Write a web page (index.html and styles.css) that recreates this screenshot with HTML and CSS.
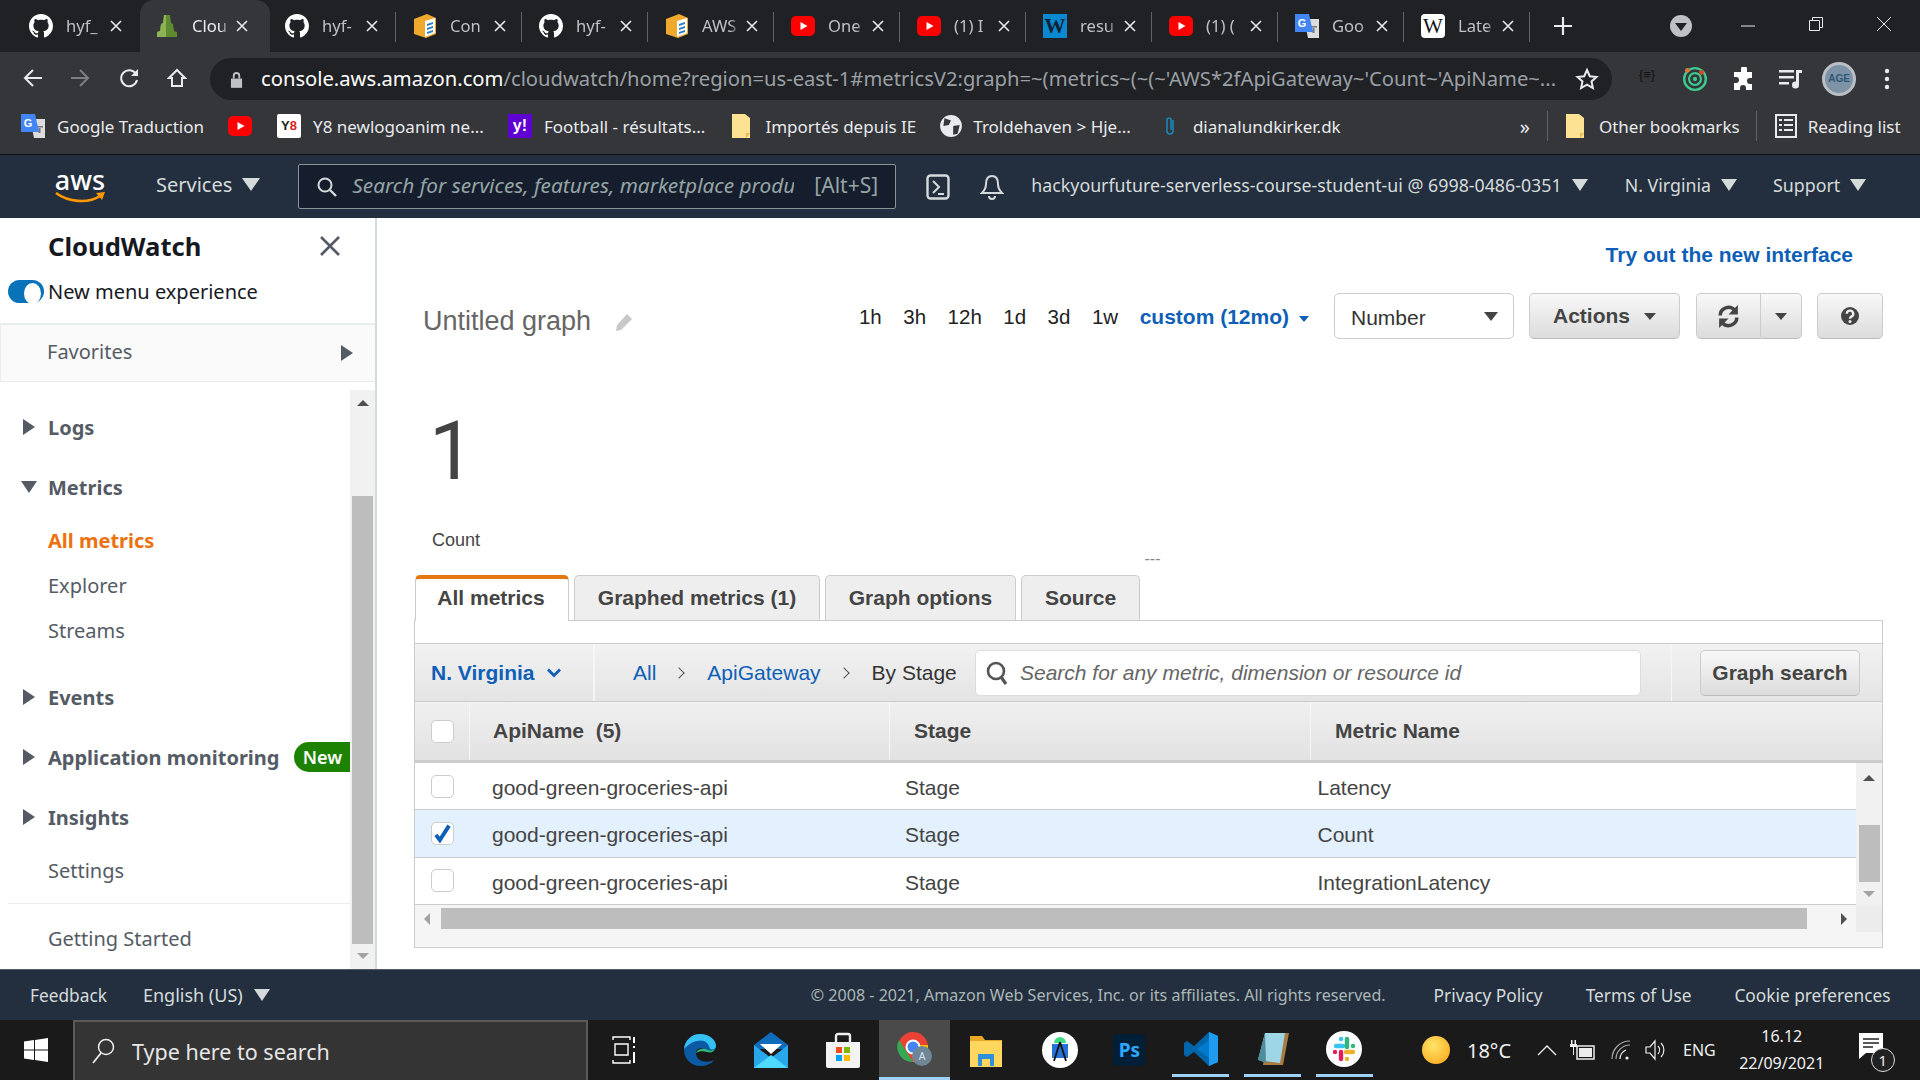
FILE: index.html
```html
<!DOCTYPE html>
<html>
<head>
  <meta charset="UTF-8">
  <title>CloudWatch Management Console</title>
  <link rel="stylesheet" href="styles.css">
</head>
<body>

<svg class="sprite" xmlns="http://www.w3.org/2000/svg">
  <symbol id="i-github" viewBox="0 0 16 16"><path fill="#fff" d="M8 0C3.58 0 0 3.58 0 8c0 3.54 2.29 6.53 5.47 7.59.4.07.55-.17.55-.38 0-.19-.01-.82-.01-1.49-2.01.37-2.53-.49-2.69-.94-.09-.23-.48-.94-.82-1.13-.28-.15-.68-.52-.01-.53.63-.01 1.08.58 1.23.82.72 1.21 1.87.87 2.33.66.07-.52.28-.87.51-1.07-1.78-.2-3.64-.89-3.64-3.95 0-.87.31-1.59.82-2.15-.08-.2-.36-1.02.08-2.12 0 0 .67-.21 2.2.82.64-.18 1.32-.27 2-.27.68 0 1.36.09 2 .27 1.53-1.04 2.2-.82 2.2-.82.44 1.1.16 1.92.08 2.12.51.56.82 1.27.82 2.15 0 3.07-1.87 3.75-3.65 3.95.29.25.54.73.54 1.48 0 1.07-.01 1.93-.01 2.2 0 .21.15.46.55.38A8.013 8.013 0 0016 8c0-4.42-3.58-8-8-8z"/></symbol>
  <symbol id="i-cw" viewBox="0 0 24 24"><path fill="#5f8a2e" d="M9 1h6l1 8 2 1 1 7 3 1v5H2v-5l3-1 1-7 2-1z"/><path fill="#8db356" d="M9 1h2v22H2v-5l3-1 1-7 2-1z"/></symbol>
  <symbol id="i-box" viewBox="0 0 24 24"><path fill="#f0a92c" d="M1 5l13-5 9 4v16l-10 4-12-4z"/><path fill="#fff" d="M12 7l10-3v15l-10 4z"/><path fill="#2a7fc0" d="M14 10l6-2v2l-6 2zm0 4l6-2v2l-6 2zm0 4l6-2v2l-6 2z"/></symbol>
  <symbol id="i-yt" viewBox="0 0 24 24"><rect x="0" y="2" width="24" height="20" rx="5" fill="#f00"/><path fill="#fff" d="M9.5 8l7 4-7 4z"/></symbol>
  <symbol id="i-gt" viewBox="0 0 24 24"><path fill="#ddd" d="M9 5h15v19H13z"/><path fill="#777" d="M15 12h7v1.5h-7zm2.500 2h2v5h-2z"/><path fill="#4285f4" d="M0 0h14l4 18H0z"/><text x="7" y="13" font-size="11" font-weight="700" fill="#fff" text-anchor="middle" font-family="Liberation Sans">G</text></symbol>
  <symbol id="i-folder" viewBox="0 0 18 24"><path fill="#fde293" d="M0 0h13l5 4v20H0z"/><path fill="#e8bd52" d="M14 24v-5h4z"/></symbol>
  <symbol id="i-x" viewBox="0 0 12 12"><path stroke="#e8eaed" stroke-width="1.600" d="M1 1l10 10M11 1L1 11"/></symbol>
</svg>

<div class="tabstrip">
  <div class="tab tab-first"><svg class="fav"><use href="#i-github"/></svg><span class="tab-title">hyf_</span><svg class="tab-x"><use href="#i-x"/></svg></div>
  <div class="tab tab-active"><svg class="fav"><use href="#i-cw"/></svg><span class="tab-title">Clou</span><svg class="tab-x"><use href="#i-x"/></svg></div>
  <div class="tab tab-first sep"><svg class="fav"><use href="#i-github"/></svg><span class="tab-title">hyf-</span><svg class="tab-x"><use href="#i-x"/></svg></div>
  <div class="tab sep"><svg class="fav"><use href="#i-box"/></svg><span class="tab-title">Con</span><svg class="tab-x"><use href="#i-x"/></svg></div>
  <div class="tab sep"><svg class="fav"><use href="#i-github"/></svg><span class="tab-title">hyf-</span><svg class="tab-x"><use href="#i-x"/></svg></div>
  <div class="tab sep"><svg class="fav"><use href="#i-box"/></svg><span class="tab-title">AWS</span><svg class="tab-x"><use href="#i-x"/></svg></div>
  <div class="tab sep"><svg class="fav"><use href="#i-yt"/></svg><span class="tab-title">One</span><svg class="tab-x"><use href="#i-x"/></svg></div>
  <div class="tab sep"><svg class="fav"><use href="#i-yt"/></svg><span class="tab-title">(1) I</span><svg class="tab-x"><use href="#i-x"/></svg></div>
  <div class="tab sep"><span class="fav fav-wp">W</span><span class="tab-title">resu</span><svg class="tab-x"><use href="#i-x"/></svg></div>
  <div class="tab sep"><svg class="fav"><use href="#i-yt"/></svg><span class="tab-title">(1) (</span><svg class="tab-x"><use href="#i-x"/></svg></div>
  <div class="tab sep"><svg class="fav"><use href="#i-gt"/></svg><span class="tab-title">Goo</span><svg class="tab-x"><use href="#i-x"/></svg></div>
  <div class="tab sep"><span class="fav fav-wiki">W</span><span class="tab-title">Late</span><svg class="tab-x"><use href="#i-x"/></svg></div>
  <svg class="tab-plus" viewBox="0 0 18 18"><path stroke="#e8eaed" stroke-width="2.200" d="M9 0v18M0 9h18"/></svg>
  <span class="tab-search"><span class="tab-search-caret"></span></span>
  <svg class="win-btn win-min" viewBox="0 0 16 16"><path stroke="#e8eaed" stroke-width="1" d="M1 8h14"/></svg>
  <svg class="win-btn win-max" viewBox="0 0 16 16"><path fill="none" stroke="#e8eaed" stroke-width="1" d="M1.500 4.500h10v10h-10zM4.500 4V1.500h10v10H12"/></svg>
  <svg class="win-btn win-close" viewBox="0 0 16 16"><path stroke="#e8eaed" stroke-width="1" d="M1 1l14 14M15 1L1 15"/></svg>
</div>

<div class="toolbar">
  <svg class="tool tool-back" viewBox="0 0 20 20"><path fill="none" stroke="#e8eaed" stroke-width="2" d="M19 10H2M10 2l-8 8 8 8"/></svg>
  <svg class="tool tool-fwd" viewBox="0 0 20 20"><path fill="none" stroke="#7c7e81" stroke-width="2" d="M1 10h17M10 2l8 8-8 8"/></svg>
  <svg class="tool tool-reload" viewBox="0 0 20 20"><path fill="none" stroke="#e8eaed" stroke-width="2" d="M17 6a8 8 0 1 0 1 6"/><path fill="#e8eaed" d="M19 1v7h-7z"/></svg>
  <svg class="tool tool-home" viewBox="0 0 20 20"><path fill="none" stroke="#e8eaed" stroke-width="2" d="M10 2L2 10h3v8h10v-8h3z"/></svg>
  <div class="omnibox">
    <svg class="lock" viewBox="0 0 14 18"><path fill="#bdc1c6" d="M1 8h12v10H1z"/><path fill="none" stroke="#bdc1c6" stroke-width="2" d="M4 8V5a3 3 0 0 1 6 0v3"/></svg>
    <span class="url"><b>console.aws.amazon.com</b>/cloudwatch/home?region=us-east-1#metricsV2:graph=~(metrics~(~(~'AWS*2fApiGateway~'Count~'ApiName~...</span>
    <svg class="star" viewBox="0 0 24 24"><path fill="none" stroke="#e8eaed" stroke-width="2" d="M12 3l2.800 6.200 6.700.7-5 4.500 1.400 6.600L12 17.600 6.100 21l1.400-6.600-5-4.500 6.700-.7z"/></svg>
  </div>
  <span class="ext ext-json">{≡}</span>
  <svg class="ext ext-ring" viewBox="0 0 24 24"><circle cx="12" cy="12" r="10" fill="none" stroke="#3ec98f" stroke-width="2.200"/><circle cx="12" cy="12" r="5.500" fill="none" stroke="#3ec98f" stroke-width="2"/><circle cx="12" cy="12" r="2" fill="#3ec98f"/><circle cx="5" cy="4" r="2.200" fill="#e0763a"/><circle cx="18" cy="6" r="2.200" fill="#d8462f"/></svg>
  <svg class="ext ext-puzzle" viewBox="0 0 24 24"><path fill="#fff" d="M9 2a3 3 0 0 1 6 0v3h5v6h-2a3 3 0 0 0 0 6h2v6h-6v-2a3 3 0 0 0-6 0v2H2v-7h2a3 3 0 0 0 0-6H2V5h7z"/></svg>
  <svg class="ext ext-media" viewBox="0 0 24 22"><path fill="#e8eaed" d="M0 2h15v2.500H0zm0 6h15v2.500H0zm0 6h10v2.500H0zM17 2h6v3h-3v12a3.500 3.500 0 1 1-3-3.400z"/></svg>
  <span class="avatar">AGE</span>
  <svg class="ext ext-dots" viewBox="0 0 6 24"><circle cx="3" cy="4" r="2.200" fill="#e8eaed"/><circle cx="3" cy="12" r="2.200" fill="#e8eaed"/><circle cx="3" cy="20" r="2.200" fill="#e8eaed"/></svg>
</div>

<div class="bookmarks">
  <span class="bm bm-1"><svg class="bm-ic"><use href="#i-gt"/></svg>Google Traduction</span>
  <span class="bm bm-2"><svg class="bm-ic"><use href="#i-yt"/></svg></span>
  <span class="bm bm-3"><span class="bm-ic bm-y8">Y<i>8</i></span>Y8 newlogoanim ne...</span>
  <span class="bm bm-4"><span class="bm-ic bm-yahoo">y!</span>Football - résultats...</span>
  <span class="bm bm-5"><svg class="bm-ic bm-fold"><use href="#i-folder"/></svg>Importés depuis IE</span>
  <span class="bm bm-6"><svg class="bm-ic bm-globe" viewBox="0 0 22 22"><circle cx="11" cy="11" r="10" fill="#e8eaed"/><path fill="#35363a" d="M5 4l6 2-2 4-5 1zm8 7l6-1-2 8-4 1z"/></svg>Troldehaven &gt; Hje...</span>
  <span class="bm bm-7"><svg class="bm-ic bm-clip" viewBox="0 0 14 22"><path fill="none" stroke="#1a87b8" stroke-width="1.600" d="M10 5v11a3 3 0 0 1-6 0V5a2 2 0 0 1 4 0v10"/></svg>dianalundkirker.dk</span>
  <span class="bm-more">»</span>
  <span class="bm-sep"></span>
  <span class="bm bm-8"><svg class="bm-ic bm-fold"><use href="#i-folder"/></svg>Other bookmarks</span>
  <span class="bm-sep bm-sep-2"></span>
  <span class="bm bm-9"><svg class="bm-ic bm-read" viewBox="0 0 22 24"><path fill="none" stroke="#e8eaed" stroke-width="2" d="M1 1h20v22H1z"/><path stroke="#e8eaed" stroke-width="2" d="M4 6h3M9 6h9M4 11h3M9 11h9M4 16h3M9 16h9"/></svg>Reading list</span>
</div>

<header class="awsnav">
  <span class="aws-logo"><span class="aws-word">aws</span><svg viewBox="0 0 50 14"><path fill="none" stroke="#f90" stroke-width="2.600" d="M1 2c12 9 32 11 44 3"/><path fill="#f90" d="M41 2l9-1-3 8z"/></svg></span>
  <span class="nav-link nav-services">Services<span class="caret caret-nav"></span></span>
  <div class="nav-search">
    <svg class="nav-search-ic" viewBox="0 0 20 20"><circle cx="8" cy="8" r="6.500" fill="none" stroke="#d5dbdb" stroke-width="2"/><path stroke="#d5dbdb" stroke-width="2.400" d="M13 13l6 6"/></svg>
    <span class="nav-search-text">Search for services, features, marketplace produ</span>
    <span class="nav-search-key">[Alt+S]</span>
  </div>
  <svg class="nav-ic nav-term" viewBox="0 0 24 26"><rect x="1.500" y="1.500" width="21" height="23" rx="3" fill="none" stroke="#d5dbdb" stroke-width="2.400"/><path fill="none" stroke="#d5dbdb" stroke-width="2" d="M7 7l6 6-6 6M12 20h6"/></svg>
  <svg class="nav-ic nav-bell" viewBox="0 0 24 26"><path fill="none" stroke="#d5dbdb" stroke-width="2" d="M12 2c-5 0-6 4-6 8 0 5-2 7-4 9h20c-2-2-4-4-4-9 0-4-1-8-6-8zM9 22a3 3 0 0 0 6 0"/></svg>
  <span class="nav-link nav-account">hackyourfuture-serverless-course-student-ui @ 6998-0486-0351<span class="caret caret-nav"></span></span>
  <span class="nav-link nav-region">N. Virginia<span class="caret caret-nav"></span></span>
  <span class="nav-link nav-support">Support<span class="caret caret-nav"></span></span>
</header>

<div class="console">
  <aside class="sidebar">
    <div class="side-head">
      <span class="side-title">CloudWatch</span>
      <svg class="side-close" viewBox="0 0 20 20"><path stroke="#545b64" stroke-width="2.600" d="M1 1l18 18M19 1L1 19"/></svg>
    </div>
    <div class="side-toggle">
      <span class="toggle"><span class="toggle-knob"></span></span>
      <span>New menu experience</span>
    </div>
    <div class="favorites">
      <span>Favorites</span>
      <span class="tri-right tri-fav"></span>
    </div>
    <div class="side-scroll">
      <nav class="side-list">
        <a class="nav-item nav-head"><span class="tri-right"></span>Logs</a>
        <a class="nav-item nav-head nav-gap"><span class="tri-down"></span>Metrics</a>
        <a class="nav-item nav-current">All metrics</a>
        <a class="nav-item nav-sub nav-explorer">Explorer</a>
        <a class="nav-item nav-sub nav-streams">Streams</a>
        <a class="nav-item nav-head nav-events"><span class="tri-right"></span>Events</a>
        <a class="nav-item nav-head nav-gap"><span class="tri-right"></span>Application monitoring<span class="badge-new">New</span></a>
        <a class="nav-item nav-head nav-gap"><span class="tri-right"></span>Insights</a>
        <a class="nav-item nav-sub nav-settings">Settings</a>
        <div class="side-rule"></div>
        <a class="nav-item nav-sub nav-started">Getting Started</a>
      </nav>
      <div class="side-bar">
        <span class="arrow-up"></span>
        <span class="side-thumb"></span>
        <span class="arrow-down"></span>
      </div>
    </div>
  </aside>

  <main class="content">
    <div class="try-row"><a class="link-strong">Try out the new interface</a></div>

    <div class="graph-bar">
      <h2 class="graph-title">Untitled graph</h2>
      <svg class="pencil" viewBox="0 0 18 18"><path fill="#c8c8c8" d="M12 1l5 5L6 17l-5 1 1-6z"/></svg>
      <div class="ranges">
        <span>1h</span><span>3h</span><span>12h</span><span>1d</span><span>3d</span><span>1w</span>
        <span class="range-custom">custom (12mo)<span class="caret caret-blue"></span></span>
      </div>
      <div class="select">Number<span class="caret caret-big"></span></div>
      <button class="btn btn-actions">Actions<span class="caret caret-btn"></span></button>
      <div class="btn-group">
        <button class="btn btn-refresh"><svg viewBox="0 0 24 24"><path fill="none" stroke="#444" stroke-width="3.400" d="M4 11a8 8 0 0 1 14-5M20 13a8 8 0 0 1-14 5"/><path fill="#444" d="M21 1v9h-9zM3 23v-9h9z"/></svg></button>
        <button class="btn btn-more"><span class="caret caret-btn"></span></button>
      </div>
      <button class="btn btn-help"><svg viewBox="0 0 18 18"><circle cx="9" cy="9" r="9" fill="#444"/><path fill="none" stroke="#f0f0f0" stroke-width="2.400" d="M5.800 6.800a3.200 3.200 0 1 1 4.600 2.900c-1 .5-1.400 1-1.400 2.100"/><circle cx="9" cy="14.500" r="1.500" fill="#f0f0f0"/></svg></button>
    </div>

    <section class="graph-area">
      <div class="big-value">1</div>
      <div class="big-label">Count</div>
      <div class="big-dash">---</div>
    </section>

    <div class="tabs">
      <span class="ctab ctab-on">All metrics</span>
      <span class="ctab ctab-graphed">Graphed metrics (1)</span>
      <span class="ctab ctab-options">Graph options</span>
      <span class="ctab ctab-source">Source</span>
    </div>

    <div class="panel">
      <div class="filter">
        <div class="filter-region">N. Virginia<svg viewBox="0 0 16 10"><path fill="none" stroke="#0f5fb8" stroke-width="2.800" d="M2 1.500l6 6 6-6"/></svg></div>
        <div class="crumbs">
          <a>All</a><span class="crumb-sep"></span><a>ApiGateway</a><span class="crumb-sep"></span><span>By Stage</span>
        </div>
        <div class="metric-search">
          <svg viewBox="0 0 22 24"><circle cx="10" cy="10" r="8" fill="none" stroke="#555" stroke-width="2.600"/><path stroke="#555" stroke-width="3.200" d="M15 16l5 7"/></svg>
          <span>Search for any metric, dimension or resource id</span>
        </div>
        <div class="filter-action"><button class="btn btn-search">Graph search</button></div>
      </div>

      <div class="thead">
        <div class="th th-check"><span class="check"></span></div>
        <div class="th th-api">ApiName&nbsp; (5)</div>
        <div class="th th-stage">Stage</div>
        <div class="th th-metric">Metric Name</div>
      </div>

      <div class="tbody-wrap">
        <div class="tbody">
          <div class="row"><span class="check"></span><span>good-green-groceries-api</span><span>Stage</span><span>Latency</span></div>
          <div class="row row-on"><span class="check"><svg viewBox="0 0 16 16"><path fill="none" stroke="#0f5fb8" stroke-width="3" d="M3 9l3 4 7-11"/></svg></span><span>good-green-groceries-api</span><span>Stage</span><span>Count</span></div>
          <div class="row"><span class="check"></span><span>good-green-groceries-api</span><span>Stage</span><span>IntegrationLatency</span></div>
        </div>
        <div class="vscroll">
          <span class="arrow-up"></span>
          <span class="vthumb"></span>
          <span class="arrow-down arrow-dim"></span>
        </div>
      </div>

      <div class="hscroll">
        <span class="arrow-left"></span>
        <span class="hthumb"></span>
        <span class="arrow-right"></span>
        <span class="hcorner"></span>
      </div>
      <div class="panel-foot"></div>
    </div>
  </main>
</div>

<footer class="awsfoot">
  <span class="foot-feedback">Feedback</span>
  <span class="foot-lang">English (US)<span class="caret caret-nav"></span></span>
  <span class="foot-copy">© 2008 - 2021, Amazon Web Services, Inc. or its affiliates. All rights reserved.</span>
  <span class="foot-link foot-privacy">Privacy Policy</span>
  <span class="foot-link">Terms of Use</span>
  <span class="foot-link">Cookie preferences</span>
</footer>

<div class="taskbar">
  <svg class="start" viewBox="0 0 24 24"><path fill="#fff" d="M0 3.500L10 2v9.500H0zM11 1.900L24 0v11.500H11zM0 12.500h10V22L0 20.500zM11 12.500h13V24l-13-1.900z"/></svg>
  <div class="task-search">
    <svg viewBox="0 0 24 26"><circle cx="15" cy="9" r="7.500" fill="none" stroke="#eee" stroke-width="1.500"/><path stroke="#eee" stroke-width="1.800" d="M10 15l-8 10"/></svg>
    <span>Type here to search</span>
  </div>
  <span class="task-cell task-view"><svg viewBox="0 0 24 28"><path fill="none" stroke="#fff" stroke-width="1.400" d="M1 4V1h17v3M3 8h13v11H3zM1 24v3h17v-3"/><path stroke="#fff" stroke-width="2" d="M22 1v6M22 10v2M22 16v11"/></svg></span>
  <span class="task-cell"><svg viewBox="0 0 36 36"><path fill="#0c59a4" d="M18 2a16 16 0 1 0 0 32c6 0 11-2 14-6-8 4-18 1-18-7 0-5 6-6 10-3 6 3 10 0 10-4C34 7 27 2 18 2z"/><path fill="#35c1f1" d="M2 17C3 8 10 2 18 2c9 0 16 6 16 12 0 3-3 4-6 3-1-7-7-10-13-8-6 1-10 5-13 8z"/><path fill="#2ebd78" d="M14 21c2-5 8-5 12-3 2 1 5 1 7-1-1 3-4 4-8 3-4-1-8-1-11 1z"/></svg></span>
  <span class="task-cell"><svg viewBox="0 0 36 36"><path fill="#0f6cbd" d="M1 13L18 0l17 13v4H1z"/><path fill="#28a8ea" d="M1 13l17 13 17-13v23H1z"/><path fill="#50d9ff" d="M1 36l17-13 17 13z"/><path fill="#fff" d="M7 12h22L18 22z"/></svg></span>
  <span class="task-cell"><svg viewBox="0 0 36 36"><path fill="none" stroke="#eee" stroke-width="2.400" d="M11 12V4a2 2 0 0 1 2-2h10a2 2 0 0 1 2 2v8"/><path fill="#f3f3f3" d="M1 10h34v24a2 2 0 0 1-2 2H3a2 2 0 0 1-2-2z"/><path fill="#f25022" d="M11 15h6v6h-6z"/><path fill="#7fba00" d="M19 15h6v6h-6z"/><path fill="#00a4ef" d="M11 23h6v6h-6z"/><path fill="#ffb900" d="M19 23h6v6h-6z"/></svg></span>
  <span class="task-cell task-active"><svg viewBox="0 0 36 36"><circle cx="16" cy="16" r="15" fill="#ea4335"/><path fill="#34a853" d="M16 31A15 15 0 0 1 2 9l9 14z"/><path fill="#fbbc05" d="M31 16a15 15 0 0 1-15 15l7-13-1-4h9z"/><circle cx="16" cy="16" r="6.500" fill="#4285f4" stroke="#fff" stroke-width="2"/><circle cx="25" cy="25" r="10" fill="#6f8697"/><text x="25" y="29" font-size="10" fill="#d8e2ea" text-anchor="middle" font-family="Liberation Sans">A</text></svg></span>
  <span class="task-cell"><svg viewBox="0 0 36 36"><path fill="#e9a825" d="M2 4h12l3 4h17v6H2z"/><path fill="#ffd75e" d="M2 9h32v26H2z"/><path fill="#2f8fd8" d="M10 22h16v12h-4v-7h-8v7h-4z"/></svg></span>
  <span class="task-cell task-android"><svg viewBox="0 0 36 36"><circle cx="18" cy="18" r="18" fill="#fff"/><path fill="#3ddc84" d="M12 11a6 6 0 0 1 12 0z"/><path fill="#2672d6" d="M10 12h16v14H10z"/><path stroke="#111" stroke-width="1.800" d="M18 10l-6 19M18 10l6 19"/></svg></span>
  <span class="task-cell"><span class="ps-icon">Ps</span></span>
  <span class="task-cell task-open"><svg viewBox="0 0 36 36"><path fill="#0065a9" d="M26 1L11 15 4 10l-3 2v12l3 2 7-5 15 14 9-4V5z"/><path fill="#007acc" d="M26 9v18l-12-9z"/><path fill="#1f9cf0" d="M26 1l9 4v26l-9 4z"/></svg></span>
  <span class="task-cell task-open"><svg viewBox="0 0 36 36"><path fill="#a67c42" d="M12 2h22l-6 32H8z"/><path fill="#9ed6e6" d="M10 2h20l-5 30-22-3z"/><path fill="#4f8c9c" d="M10 2L3 29l8 3z"/></svg></span>
  <span class="task-cell task-open"><svg viewBox="0 0 36 36"><circle cx="18" cy="18" r="18" fill="#fff"/><path stroke="#36c5f0" stroke-width="4.400" stroke-linecap="round" d="M10 15h7M15 8v0"/><path stroke="#2eb67d" stroke-width="4.400" stroke-linecap="round" d="M21 8v8M27 15v0"/><path stroke="#ecb22e" stroke-width="4.400" stroke-linecap="round" d="M20 21h7M21 28v0"/><path stroke="#e01e5a" stroke-width="4.400" stroke-linecap="round" d="M15 21v7M9 21v0"/></svg></span>
  <span class="sun"></span>
  <span class="temp">18°C</span>
  <svg class="tray tray-up" viewBox="0 0 20 12"><path fill="none" stroke="#eee" stroke-width="1.400" d="M1 11l9-9 9 9"/></svg>
  <svg class="tray tray-power" viewBox="0 0 26 22"><path fill="none" stroke="#eee" stroke-width="1.500" d="M7 7h17v13H7z"/><path fill="#eee" d="M9 9h13v9H9zM1 1h1.500v4H1zM4.500 1H6v4H4.500zM0 5h7v3H0zM3 8h1v8H3z"/></svg>
  <svg class="tray tray-wifi" viewBox="0 0 20 22"><path fill="none" stroke="#aaa" stroke-width="1.200" d="M1 20A18 18 0 0 1 19 2M5 20A14 14 0 0 1 19 6"/><path fill="none" stroke="#eee" stroke-width="1.200" d="M9 20a10 10 0 0 1 6-9"/><circle cx="16" cy="19" r="1.600" fill="#eee"/></svg>
  <svg class="tray tray-sound" viewBox="0 0 20 22"><path fill="none" stroke="#eee" stroke-width="1.200" d="M1 8h4l5-6v18l-5-6H1zM13 7a6 6 0 0 1 0 8M16 4a10 10 0 0 1 0 14"/></svg>
  <span class="lang">ENG</span>
  <span class="clock"><span>16.12</span><span>22/09/2021</span></span>
  <span class="notify"><svg viewBox="0 0 26 28"><path fill="#fff" d="M1 1h24v20H8l-7 6z"/><path stroke="#222" stroke-width="1.600" d="M5 7h16M5 11h16M5 15h10"/></svg><span class="notify-num">1</span></span>
</div>

</body>
</html>
```

FILE: styles.css
```css
html, body {
  margin: 0;
  padding: 0;
}

body {
  width: 1920px;
  height: 1080px;
  overflow: hidden;
  display: flex;
  flex-direction: column;
  font-family: "Liberation Sans", sans-serif;
  background: #fff;
}

.sprite {
  display: none;
}

button {
  font-family: inherit;
}

/* browser tabs */
.tabstrip {
  height: 52px;
  flex: none;
  display: flex;
  align-items: center;
  padding-left: 14px;
  background: #202124;
  font-family: "Noto Sans", sans-serif;
  font-size: 16.600px;
  color: #bdc1c6;
}

.tab {
  box-sizing: border-box;
  width: 126px;
  height: 52px;
  flex: none;
  display: flex;
  align-items: center;
  padding-left: 17px;
  position: relative;
}

.tab-first {
  padding-left: 15px;
}

.tab-active {
  width: 130px;
  padding-left: 15px;
  background: #35363a;
  border-radius: 14px 14px 0 0;
  color: #e8eaed;
}

.sep::after {
  content: "";
  position: absolute;
  right: 0;
  top: 12px;
  height: 30px;
  width: 1px;
  background: #5f6368;
}

.fav {
  width: 24px;
  height: 24px;
  flex: none;
}

.fav-wp,
.fav-wiki {
  display: block;
  text-align: center;
  font-family: "Liberation Serif", serif;
  font-size: 21px;
  line-height: 24px;
}

.fav-wp {
  background: #0a88d0;
  color: #123;
  font-weight: 700;
}

.fav-wiki {
  background: #fff;
  color: #111;
  border-radius: 4px;
}

.tab-title {
  width: 38px;
  margin-left: 13px;
  padding-bottom: 2px;
  overflow: hidden;
  white-space: nowrap;
  -webkit-mask-image: linear-gradient(to right, #000 75%, transparent);
  mask-image: linear-gradient(to right, #000 75%, transparent);
}

.tab-x {
  width: 12px;
  height: 12px;
  margin-left: 6px;
}

.tab-plus {
  width: 18px;
  height: 18px;
  margin-left: 24px;
}

.tab-search {
  width: 22px;
  height: 22px;
  margin-left: 98px;
  border-radius: 50%;
  background: #bdc1c6;
  display: flex;
  align-items: center;
  justify-content: center;
}

.tab-search-caret {
  border-left: 6px solid transparent;
  border-right: 6px solid transparent;
  border-top: 8px solid #202124;
  margin-top: 2px;
}

.win-btn {
  width: 16px;
  height: 16px;
  flex: none;
}

.win-min {
  margin-left: 48px;
}

.win-max {
  margin-left: 52px;
  margin-top: -4px;
}

.win-close {
  margin-left: 52px;
  margin-top: -4px;
}

/* address bar */
.toolbar {
  height: 48px;
  flex: none;
  display: flex;
  align-items: flex-start;
  background: #35363a;
  padding-left: 23px;
}

.tool {
  width: 20px;
  height: 20px;
  margin-top: 16px;
  flex: none;
}

.tool-fwd {
  margin-left: 27px;
}

.tool-reload {
  margin-left: 29px;
}

.tool-home {
  margin-left: 28px;
}

.omnibox {
  box-sizing: border-box;
  width: 1402px;
  height: 42px;
  margin-top: 6px;
  margin-left: 23px;
  display: flex;
  align-items: center;
  padding-left: 20px;
  background: #202124;
  border-radius: 21px;
  font-family: "Noto Sans", sans-serif;
  font-size: 20.200px;
  color: #9aa0a6;
}

.lock {
  width: 13px;
  height: 17px;
  flex: none;
}

.url {
  margin-left: 18px;
  width: 1306px;
  padding-bottom: 2px;
  flex: none;
  white-space: nowrap;
  overflow: hidden;
}

.url b {
  font-weight: 400;
  color: #fff;
}

.star {
  width: 24px;
  height: 24px;
  margin-left: 8px;
  flex: none;
}

.ext {
  flex: none;
}

.ext-json {
  width: 24px;
  margin-left: 23px;
  margin-top: 15px;
  font-size: 13px;
  color: #111;
  text-align: center;
}

.ext-ring {
  width: 26px;
  height: 26px;
  margin-left: 22.500px;
  margin-top: 14px;
}

.ext-puzzle {
  width: 24px;
  height: 24px;
  margin-left: 24.500px;
  margin-top: 15px;
}

.ext-media {
  width: 24px;
  height: 22px;
  margin-left: 23px;
  margin-top: 16px;
}

.avatar {
  box-sizing: border-box;
  width: 34px;
  height: 34px;
  margin-left: 19px;
  margin-top: 10px;
  flex: none;
  border-radius: 50%;
  background: #7e93a6;
  border: 3px solid #b9bfc4;
  color: #2c5878;
  font-size: 10px;
  font-weight: 700;
  line-height: 28px;
  text-align: center;
}

.ext-dots {
  width: 6px;
  height: 24px;
  margin-left: 28px;
  margin-top: 15px;
}

/* bookmarks bar */
.bookmarks {
  height: 55px;
  flex: none;
  box-sizing: border-box;
  display: flex;
  align-items: center;
  padding-left: 21px;
  padding-bottom: 2px;
  background: #35363a;
  border-bottom: 1px solid #111;
  font-family: "Noto Sans", sans-serif;
  font-size: 17px;
  color: #e8eaed;
}

.bm {
  display: flex;
  align-items: center;
  white-space: nowrap;
  flex: none;
}

.bm-ic {
  width: 24px;
  height: 24px;
  margin-right: 12px;
  flex: none;
}

.bm-2 { margin-left: 24px; }
.bm-2 .bm-ic { margin-right: 0; }
.bm-3 { margin-left: 25px; }
.bm-4 { margin-left: 24px; }
.bm-5 { margin-left: 27px; }
.bm-6 { margin-left: 23px; }
.bm-7 { margin-left: 32px; }
.bm-8 { margin-left: 18px; }
.bm-9 { margin-left: 17px; }

.bm-fold {
  width: 18px;
  margin-right: 15px;
}

.bm-globe {
  margin-right: 10px;
}

.bm-read {
  margin-right: 10px;
}

.bm-clip {
  width: 14px;
  margin-right: 16px;
}

.bm-y8 {
  box-sizing: border-box;
  background: #fff;
  color: #222;
  font-family: "Liberation Sans", sans-serif;
  font-size: 13px;
  font-weight: 700;
  line-height: 24px;
  text-align: center;
  border-radius: 2px;
}

.bm-y8 i {
  font-style: normal;
  color: #d22;
}

.bm-yahoo {
  background: #5f01d1;
  color: #fff;
  font-family: "Liberation Sans", sans-serif;
  font-size: 16px;
  font-weight: 700;
  line-height: 24px;
  text-align: center;
}

.bm-more {
  margin-left: 179px;
  font-size: 20px;
  flex: none;
}

.bm-sep {
  width: 1px;
  height: 30px;
  background: #5f6368;
  margin-left: 17px;
  flex: none;
}

.bm-sep-2 {
  margin-left: 16px;
}

/* aws console header */
.awsnav {
  box-sizing: border-box;
  height: 63px;
  flex: none;
  display: flex;
  align-items: center;
  background: #232f3e;
  font-family: "Noto Sans", sans-serif;
  font-size: 17.800px;
  color: #d5dbdb;
}

.aws-logo {
  width: 50px;
  margin-left: 55px;
  display: flex;
  flex-direction: column;
  align-items: center;
  flex: none;
}

.aws-word {
  font-family: "Noto Sans", sans-serif;
  font-size: 27px;
  font-weight: 500;
  line-height: 22px;
  color: #fff;
}

.aws-logo svg {
  width: 50px;
  height: 14px;
}

.nav-link {
  display: flex;
  align-items: center;
  white-space: nowrap;
  flex: none;
  padding-bottom: 4px;
}

.nav-services {
  margin-left: 51px;
  font-size: 20px;
}

.caret {
  display: inline-block;
  border-left: 8px solid transparent;
  border-right: 8px solid transparent;
  border-top: 12px solid #d5dbdb;
  flex: none;
}

.caret-nav {
  margin-left: 10px;
}

.nav-services .caret-nav {
  border-left-width: 9px;
  border-right-width: 9px;
  border-top-width: 13px;
}

.nav-search {
  box-sizing: border-box;
  width: 598px;
  height: 45px;
  margin-left: 38px;
  display: flex;
  align-items: center;
  padding-left: 18px;
  background: #161e2d;
  border: 1px solid #879596;
  border-radius: 2px;
  flex: none;
}

.nav-search-ic {
  width: 20px;
  height: 20px;
  flex: none;
}

.nav-search-text {
  width: 442px;
  margin-left: 15px;
  padding-bottom: 3px;
  font-size: 20.800px;
  font-style: italic;
  color: #95a5a6;
  white-space: nowrap;
  overflow: hidden;
  flex: none;
}

.nav-search-key {
  margin-left: 20px;
  padding-bottom: 3px;
  font-size: 21px;
  color: #95a5a6;
}

.nav-ic {
  width: 24px;
  height: 26px;
  flex: none;
}

.nav-term {
  margin-left: 30px;
}

.nav-bell {
  margin-left: 30px;
}

.nav-account {
  margin-left: 27px;
}

.nav-region {
  margin-left: 37px;
}

.nav-support {
  margin-left: 36px;
}

/* console body */
.console {
  flex: 1;
  min-height: 0;
  display: flex;
}

.sidebar {
  box-sizing: border-box;
  width: 377px;
  flex: none;
  display: flex;
  flex-direction: column;
  border-right: 2px solid #d5dbdb;
  font-family: "Noto Sans", sans-serif;
  color: #545b64;
}

.side-head {
  height: 54px;
  flex: none;
  display: flex;
  align-items: center;
  padding-left: 48px;
  padding-top: 2px;
  box-sizing: border-box;
}

.side-title {
  font-size: 25.600px;
  font-weight: 700;
  color: #16191f;
}

.side-close {
  width: 20px;
  height: 20px;
  margin-left: auto;
  margin-right: 35px;
}

.side-toggle {
  height: 42px;
  flex: none;
  display: flex;
  align-items: center;
  padding-left: 8px;
  font-size: 20px;
  color: #16191f;
  gap: 4px;
}

.side-toggle span:last-child {
  padding-bottom: 4px;
}

.toggle {
  box-sizing: border-box;
  width: 36px;
  height: 23px;
  margin-bottom: 3px;
  padding: 3px;
  padding-left: 16px;
  background: #0972b8;
  border-radius: 12px;
}

.toggle-knob {
  display: block;
  width: 17px;
  height: 17px;
  border-radius: 50%;
  background: #fff;
}

.favorites {
  box-sizing: border-box;
  height: 59px;
  margin-top: 9px;
  flex: none;
  display: flex;
  align-items: center;
  justify-content: space-between;
  padding: 0 22px 0 46px;
  background: #fafafa;
  border-top: 2px solid #eaeded;
  border-bottom: 1px solid #eaeded;
  border-left: 1px solid #eaeded;
  font-size: 20px;
}

.favorites span:first-child {
  padding-bottom: 4px;
}

.tri-right {
  display: inline-block;
  border-top: 8px solid transparent;
  border-bottom: 8px solid transparent;
  border-left: 12px solid #545b64;
}

.tri-down {
  display: inline-block;
  border-left: 8px solid transparent;
  border-right: 8px solid transparent;
  border-top: 12px solid #545b64;
}

.side-scroll {
  flex: 1;
  min-height: 0;
  display: flex;
  padding-top: 8px;
}

.side-list {
  width: 350px;
  flex: none;
  padding-top: 22px;
  overflow: hidden;
}

.nav-item {
  display: flex;
  align-items: center;
  height: 30px;
  padding-left: 48px;
  position: relative;
  font-size: 20px;
  white-space: nowrap;
}

.nav-head {
  font-weight: 700;
}

.nav-head .tri-right,
.nav-head .tri-down {
  position: absolute;
  left: 23px;
}

.nav-head .tri-down {
  left: 21px;
}

.nav-gap { margin-top: 30px; }
.nav-current { margin-top: 23px; font-weight: 700; color: #ec7211; }
.nav-explorer { margin-top: 15px; }
.nav-streams { margin-top: 15px; }
.nav-events { margin-top: 37px; }
.nav-settings { margin-top: 23px; }
.nav-started { margin-top: 19px; }

.side-rule {
  height: 1px;
  margin: 18px 0 0 8px;
  background: #eaeded;
}

.badge-new {
  width: 56px;
  height: 30px;
  margin-left: 15px;
  background: #1d8102;
  border-radius: 15px 0 0 15px;
  color: #fff;
  font-size: 18px;
  font-weight: 600;
  line-height: 30px;
  text-align: center;
  flex: none;
}

.side-bar {
  width: 25px;
  flex: none;
  display: flex;
  flex-direction: column;
  align-items: center;
  background: #f1f1f1;
}

.side-thumb {
  width: 21px;
  height: 448px;
  margin-top: 90px;
  background: #bdbdbd;
}

.arrow-up {
  margin-top: 10px;
  border-left: 6px solid transparent;
  border-right: 6px solid transparent;
  border-bottom: 6px solid #505050;
  flex: none;
}

.arrow-down {
  margin-top: 9px;
  border-left: 6px solid transparent;
  border-right: 6px solid transparent;
  border-top: 6px solid #a3a3a3;
  flex: none;
}

/* main content */
.content {
  flex: 1;
  min-width: 0;
  padding: 0 37px 0 37px;
  display: flex;
  flex-direction: column;
}

.try-row {
  height: 75px;
  flex: none;
  padding-top: 25px;
  box-sizing: border-box;
  text-align: right;
  padding-right: 30px;
}

.link-strong {
  font-size: 21px;
  font-weight: 700;
  line-height: 24px;
  color: #0f5fb8;
}

.graph-bar {
  height: 46px;
  flex: none;
  display: flex;
  align-items: center;
  white-space: nowrap;
}

.graph-title {
  margin: 10px 0 0 9px;
  font-size: 27px;
  font-weight: 400;
  color: #666;
}

.pencil {
  width: 18px;
  height: 18px;
  margin: 12px 0 0 24px;
}

.ranges {
  display: flex;
  align-items: center;
  gap: 21.500px;
  margin-left: auto;
  margin-right: 25px;
  padding-top: 2px;
  font-size: 20.500px;
  color: #222;
}

.range-custom {
  font-size: 21px;
  font-weight: 700;
  color: #0f5fb8;
}

.caret-blue {
  margin-left: 10px;
  margin-bottom: 2px;
  border-left-width: 5px;
  border-right-width: 5px;
  border-top: 6px solid #0f5fb8;
}

.select {
  box-sizing: border-box;
  width: 180px;
  height: 46px;
  display: flex;
  align-items: center;
  justify-content: space-between;
  padding: 4px 15px 0 16px;
  background: #fff;
  border: 1px solid #ccc;
  border-radius: 5px;
  font-size: 21px;
  color: #333;
}

.caret-big {
  margin-top: -3px;
  border-left-width: 7px;
  border-right-width: 7px;
  border-top: 9px solid #444;
}

.caret-btn {
  border-left-width: 6px;
  border-right-width: 6px;
  border-top: 7px solid #444;
}

.btn {
  box-sizing: border-box;
  height: 46px;
  padding: 0;
  background: linear-gradient(to bottom, #f8f8f8, #dcdcdc);
  border: 1px solid #ccc;
  border-bottom-color: #bbb;
  border-radius: 5px;
  color: #444;
  font-size: 21px;
  font-weight: 700;
}

.btn-actions {
  width: 151px;
  margin-left: 15px;
  display: flex;
  align-items: center;
  justify-content: center;
  gap: 14px;
}

.btn-group {
  margin-left: 16px;
  display: flex;
  flex: none;
}

.btn-refresh {
  width: 65px;
  display: flex;
  align-items: center;
  justify-content: center;
  border-radius: 5px 0 0 5px;
}

.btn-refresh svg {
  width: 25px;
  height: 25px;
}

.btn-more {
  width: 41px;
  display: flex;
  align-items: center;
  justify-content: center;
  border-left: 0;
  border-radius: 0 5px 5px 0;
}

.btn-help {
  width: 66px;
  margin-left: 15px;
  display: flex;
  align-items: center;
  justify-content: center;
}

.btn-help svg {
  width: 18px;
  height: 18px;
}

.graph-area {
  height: 236px;
  flex: none;
  display: flex;
  flex-direction: column;
}

.big-value {
  margin: 73px 0 0 15px;
  font-family: Roboto, sans-serif;
  font-size: 81px;
  line-height: 80px;
  color: #444;
}

.big-label {
  margin: 36px 0 0 18px;
  font-size: 18px;
  line-height: 24px;
  color: #444;
}

.big-dash {
  margin: 0 0 0 8px;
  font-size: 16px;
  line-height: 14px;
  color: #888;
  text-align: center;
}

.tabs {
  height: 45px;
  flex: none;
  display: flex;
  align-items: flex-start;
  gap: 5px;
  padding-left: 1px;
  position: relative;
  z-index: 1;
}

.ctab {
  box-sizing: border-box;
  height: 45px;
  display: flex;
  align-items: center;
  justify-content: center;
  background: #eee;
  border: 1px solid #ccc;
  border-bottom: 0;
  border-radius: 5px 5px 0 0;
  font-size: 21px;
  font-weight: 700;
  color: #444;
}

.ctab-on {
  width: 154px;
  height: 46px;
  padding-bottom: 4px;
  padding-right: 2px;
  background: #fff;
  border-top: 4px solid #e47911;
}

.ctab-graphed { width: 246px; }
.ctab-options { width: 191px; }
.ctab-source { width: 119px; }

.panel {
  box-sizing: border-box;
  height: 328px;
  flex: none;
  padding-top: 22px;
  border: 1px solid #ccc;
  display: flex;
  flex-direction: column;
}

.filter {
  box-sizing: border-box;
  height: 59px;
  flex: none;
  display: flex;
  align-items: center;
  background: linear-gradient(to bottom, #f2f2f2, #e4e4e4);
  border-top: 1px solid #ccc;
  border-bottom: 1px solid #ccc;
  font-size: 21px;
}

.filter-region {
  box-sizing: border-box;
  width: 180px;
  height: 100%;
  flex: none;
  display: flex;
  align-items: center;
  gap: 12px;
  padding-left: 16px;
  border-right: 2px solid #f6f6f6;
  font-weight: 700;
  color: #0f5fb8;
}

.filter-region svg {
  width: 16px;
  height: 10px;
}

.crumbs {
  width: 380px;
  flex: none;
  display: flex;
  align-items: center;
  padding-left: 38px;
  box-sizing: border-box;
  color: #333;
}

.crumbs a {
  color: #0f5fb8;
}

.crumb-sep {
  width: 7px;
  height: 7px;
  margin: 0 24px 0 19px;
  border-top: 1.500px solid #555;
  border-right: 1.500px solid #555;
  transform: rotate(45deg);
  flex: none;
}

.metric-search {
  box-sizing: border-box;
  width: 666px;
  height: 46px;
  flex: none;
  display: flex;
  align-items: center;
  gap: 12px;
  padding-left: 10px;
  background: #fff;
  border: 1px solid #ddd;
  border-radius: 5px;
  font-style: italic;
  color: #666;
}

.metric-search svg {
  width: 22px;
  height: 24px;
  flex: none;
}

.filter-action {
  flex: 1;
  height: 100%;
  margin-left: 30px;
  display: flex;
  align-items: center;
  padding-left: 28px;
  border-left: 1px solid #f6f6f6;
}

.btn-search {
  width: 160px;
}

.thead {
  box-sizing: border-box;
  height: 61px;
  flex: none;
  display: flex;
  background: linear-gradient(to bottom, #f0f0f0, #e2e2e2);
  border-bottom: 3px solid #ccc;
  font-size: 21px;
  font-weight: 700;
  color: #444;
}

.th {
  box-sizing: border-box;
  display: flex;
  align-items: center;
  border-right: 1px solid #f6f6f6;
  flex: none;
}

.th-check {
  width: 55px;
  padding-left: 16px;
}

.th-api {
  width: 420px;
  padding-left: 23px;
}

.th-stage {
  width: 421px;
  padding-left: 24px;
}

.th-metric {
  flex: 1;
  padding-left: 24px;
  border-right: 0;
}

.check {
  box-sizing: border-box;
  width: 23px;
  height: 23px;
  flex: none;
  display: block;
  background: #fff;
  border: 1px solid #ccc;
  border-radius: 5px;
}

.check svg {
  display: block;
  width: 21px;
  height: 21px;
}

.tbody-wrap {
  height: 142px;
  flex: none;
  display: flex;
}

.tbody {
  width: 1441px;
  flex: none;
}

.row {
  box-sizing: border-box;
  height: 47.330px;
  display: grid;
  grid-template-columns: 77px 413px 412.500px 1fr;
  align-items: center;
  background: #fff;
  border-bottom: 1px solid #ccc;
  font-size: 21px;
  color: #444;
}

.row span:not(.check) {
  padding-top: 4px;
}

.row .check {
  margin-left: 16px;
}

.row-on {
  background: #e3f0fd;
}

.vscroll {
  width: 26px;
  flex: none;
  display: flex;
  flex-direction: column;
  align-items: center;
  background: #f1f1f1;
}

.vscroll .arrow-up {
  margin-top: 12px;
}

.vthumb {
  width: 21px;
  height: 57px;
  margin-top: 44px;
  background: #bdbdbd;
  flex: none;
}

.arrow-dim {
  margin-top: 9px;
}

.hscroll {
  height: 27px;
  flex: none;
  display: flex;
  align-items: center;
  background: #f5f5f5;
}

.arrow-left {
  margin-left: 9px;
  border-top: 6px solid transparent;
  border-bottom: 6px solid transparent;
  border-right: 6px solid #a3a3a3;
  flex: none;
}

.hthumb {
  width: 1366px;
  height: 21px;
  margin-left: 11px;
  background: #bdbdbd;
  flex: none;
}

.arrow-right {
  margin-left: 34px;
  border-top: 6px solid transparent;
  border-bottom: 6px solid transparent;
  border-left: 6px solid #505050;
  flex: none;
}

.hcorner {
  width: 26px;
  height: 100%;
  margin-left: auto;
  background: #ececec;
}

.panel-foot {
  flex: 1;
  background: #f5f5f5;
}

/* aws footer */
.awsfoot {
  height: 51px;
  flex: none;
  display: flex;
  align-items: center;
  padding-left: 30px;
  background: #232f3e;
  border-top: 1px solid #545b64;
  box-sizing: border-box;
  font-family: "Noto Sans", sans-serif;
  font-size: 17.300px;
  color: #d5dbdb;
  white-space: nowrap;
}

.foot-lang {
  display: flex;
  align-items: center;
  margin-left: 36px;
  font-size: 18px;
}

.foot-lang .caret-nav {
  margin-left: 11px;
}

.foot-copy {
  margin-left: 541px;
  font-size: 16.100px;
  color: #aab7b8;
}

.foot-link {
  margin-left: 43px;
}

.foot-privacy {
  margin-left: 48px;
}

/* windows taskbar */
.taskbar {
  height: 60px;
  flex: none;
  display: flex;
  align-items: center;
  background: #1a1a1a;
  font-family: "Noto Sans", sans-serif;
  color: #f0f0f0;
}

.start {
  width: 24px;
  height: 24px;
  margin-left: 24px;
  flex: none;
}

.task-search {
  box-sizing: border-box;
  width: 515px;
  height: 60px;
  margin-left: 25px;
  flex: none;
  display: flex;
  align-items: center;
  gap: 17px;
  padding-left: 16px;
  background: #343434;
  border: 2px solid #5a5a5a;
  border-bottom: 0;
  font-size: 21.500px;
  color: #e6e6e6;
}

.task-search svg {
  width: 24px;
  height: 26px;
  flex: none;
}

.task-cell {
  box-sizing: border-box;
  width: 71.600px;
  height: 60px;
  flex: none;
  display: flex;
  align-items: center;
  justify-content: center;
}

.task-cell svg {
  width: 36px;
  height: 36px;
}

.task-view {
  width: 76px;
  padding-right: 4px;
}

.task-view svg {
  width: 24px;
  height: 28px;
}

.task-android {
  padding-left: 4px;
}

.task-active {
  background: #4a4a4a;
  border-bottom: 3px solid #9fd0f5;
}

.task-open {
  border-bottom: 3px solid transparent;
  background: linear-gradient(#9fd0f5, #9fd0f5) center bottom / 57px 3px no-repeat;
}

.ps-icon {
  width: 32px;
  height: 32px;
  background: #001e36;
  border-radius: 4px;
  color: #31a8ff;
  font-size: 19px;
  font-weight: 700;
  line-height: 32px;
  text-align: center;
}

.sun {
  width: 28px;
  height: 28px;
  margin-left: 42px;
  flex: none;
  border-radius: 50%;
  background: radial-gradient(circle at 40% 35%, #ffe36a, #fca311);
}

.temp {
  margin-left: 17px;
  font-size: 20px;
  flex: none;
}

.tray {
  flex: none;
}

.tray-up {
  width: 20px;
  height: 12px;
  margin-left: 26px;
}

.tray-power {
  width: 26px;
  height: 22px;
  margin-left: 13px;
}

.tray-wifi {
  width: 20px;
  height: 22px;
  margin-left: 15px;
}

.tray-sound {
  width: 20px;
  height: 22px;
  margin-left: 14px;
}

.lang {
  margin-left: 18px;
  font-size: 16px;
  flex: none;
}

.clock {
  width: 100px;
  margin-left: 16px;
  flex: none;
  display: flex;
  flex-direction: column;
  align-items: center;
  gap: 6px;
  font-size: 16px;
  line-height: 21px;
}

.notify {
  width: 38px;
  height: 36px;
  margin-left: 26px;
  position: relative;
  flex: none;
}

.notify svg {
  width: 26px;
  height: 28px;
}

.notify-num {
  position: absolute;
  right: 1px;
  bottom: -4px;
  width: 24px;
  height: 24px;
  box-sizing: border-box;
  background: #222;
  border: 1px solid #ddd;
  border-radius: 50%;
  font-size: 15px;
  line-height: 22px;
  text-align: center;
}
```
